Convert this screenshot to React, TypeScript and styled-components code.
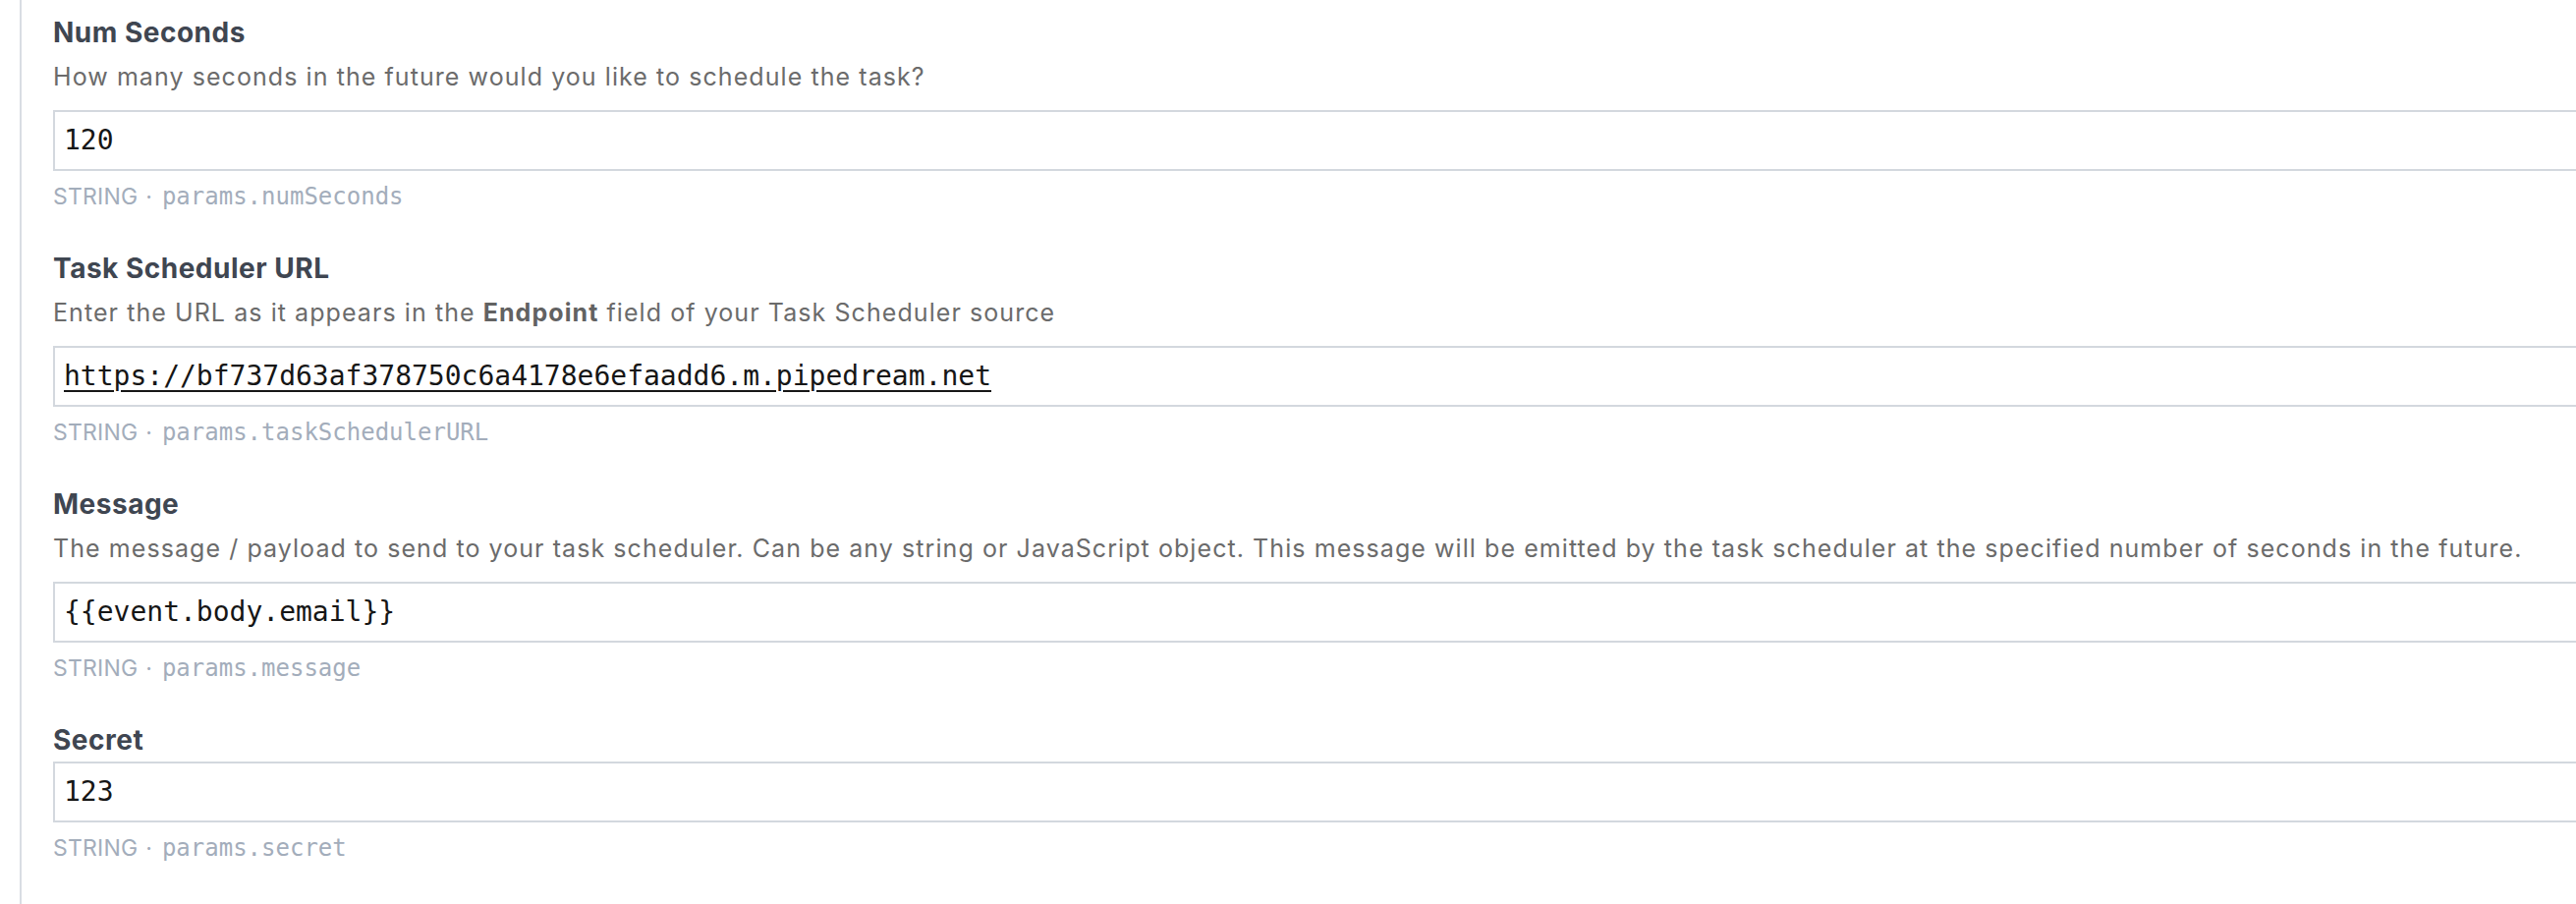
import React from 'react';
import styled, { createGlobalStyle } from 'styled-components';

const GlobalStyle = createGlobalStyle`
  html, body {
    margin: 0;
    padding: 0;
    background: #ffffff;
    overflow: hidden;
  }
  body {
    font-family: Inter, "Noto Sans", "Liberation Sans", sans-serif;
  }
`;

const Panel = styled.div`
  box-sizing: border-box;
  width: 2720px;
  min-height: 100vh;
  margin-left: 20px;
  padding: 13px 0 0 32px;
  border-left: 2px solid #d9dde3;
`;

const Field = styled.div`
  & + & {
    margin-top: 37px;
  }
`;

const Label = styled.label`
  display: block;
  font-size: 28px;
  line-height: 40px;
  font-weight: 700;
  letter-spacing: 0.5px;
  color: #3f4651;
  margin-bottom: 2px;
`;

const Description = styled.div`
  font-size: 25px;
  line-height: 36px;
  letter-spacing: 1.07px;
  color: #6b6b6b;
  margin: 7px 0 16px;

  b {
    font-weight: 700;
    color: #626262;
  }
`;

const FieldBox = styled.div`
  box-sizing: border-box;
  height: 62px;
  border: 2px solid #d3d8de;
  padding: 0 10px 1px 9px;
  display: flex;
  align-items: center;
  background: #fff;
`;

const Value = styled.span<{ $link?: boolean }>`
  font-family: "DejaVu Sans Mono", "Liberation Mono", monospace;
  font-size: 28px;
  line-height: 32px;
  color: #161616;
  white-space: pre;
  text-decoration: ${(p) => (p.$link ? 'underline' : 'none')};
  text-decoration-thickness: 2px;
  text-underline-offset: 5px;
`;

const Hint = styled.div`
  display: flex;
  align-items: baseline;
  margin-top: 10px;
  font-size: 23px;
  line-height: 32px;
  color: #a3adbb;
`;

const Type = styled.span`
  letter-spacing: 0.2px;
`;

const Dot = styled.span`
  margin: 0 10px 0 8px;
`;

const Path = styled.span`
  font-family: "DejaVu Sans Mono", "Liberation Mono", monospace;
  font-size: 24px;
`;

type Param = {
  label: string;
  description?: React.ReactNode;
  value: string;
  path: string;
  link?: boolean;
};

const params: Param[] = [
  {
    label: 'Num Seconds',
    description: 'How many seconds in the future would you like to schedule the task?',
    value: '120',
    path: 'params.numSeconds',
  },
  {
    label: 'Task Scheduler URL',
    description: (
      <>
        Enter the URL as it appears in the <b>Endpoint</b> field of your Task Scheduler source
      </>
    ),
    value: 'https://bf737d63af378750c6a4178e6efaadd6.m.pipedream.net',
    path: 'params.taskSchedulerURL',
    link: true,
  },
  {
    label: 'Message',
    description:
      'The message / payload to send to your task scheduler. Can be any string or JavaScript object. This message will be emitted by the task scheduler at the specified number of seconds in the future.',
    value: '{{event.body.email}}',
    path: 'params.message',
  },
  {
    label: 'Secret',
    value: '123',
    path: 'params.secret',
  },
];

const App = () => {
  return (
    <>
      <GlobalStyle />
      <Panel>
        {params.map((p) => (
          <Field key={p.path}>
            <Label>{p.label}</Label>
            {p.description && <Description>{p.description}</Description>}
            <FieldBox role="textbox">
              <Value $link={p.link}>{p.value}</Value>
            </FieldBox>
            <Hint>
              <Type>STRING</Type>
              <Dot>·</Dot>
              <Path>{p.path}</Path>
            </Hint>
          </Field>
        ))}
      </Panel>
    </>
  );
};

export default App;
